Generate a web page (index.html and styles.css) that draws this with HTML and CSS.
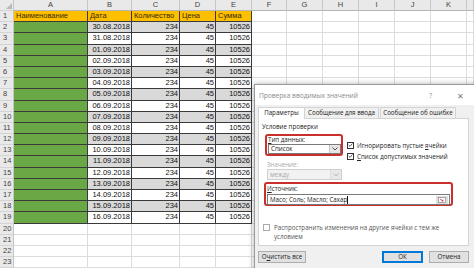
FILE: index.html
```html
<!DOCTYPE html>
<html>
<head>
    <title>Проверка вводимых значений</title>
    <link rel="stylesheet" href="styles.css">
</head>
<body>
    <div class="sheet">
        <div class="row head-row">
            <span class="rh corner"><i class="corner-mark"></i></span>
            <span class="ch">A</span><span class="ch">B</span><span class="ch">C</span><span class="ch">D</span><span class="ch">E</span>
            <span class="ch">F</span><span class="ch">G</span><span class="ch">H</span><span class="ch">I</span><span class="ch">J</span><span class="ch">K</span><span class="ch"></span>
        </div>
        <div class="row">
            <span class="rh">1</span>
            <span class="c dc hd">Наименование</span><span class="c dc hd">Дата</span><span class="c dc hd">Количество</span><span class="c dc hd">Цена</span><span class="c dc hd">Сумма</span>
            <span class="c"></span><span class="c"></span><span class="c"></span><span class="c"></span><span class="c"></span><span class="c"></span><span class="c"></span>
        </div>
        <div class="row alt">
            <span class="rh">2</span><span class="c dc name"></span><span class="c dc num">30.08.2018</span><span class="c dc num">234</span><span class="c dc num">45</span><span class="c dc num">10526</span>
            <span class="c"></span><span class="c"></span><span class="c"></span><span class="c"></span><span class="c"></span><span class="c"></span><span class="c"></span>
        </div>
        <div class="row">
            <span class="rh">3</span><span class="c dc name"></span><span class="c dc num">31.08.2018</span><span class="c dc num">234</span><span class="c dc num">45</span><span class="c dc num">10526</span>
            <span class="c"></span><span class="c"></span><span class="c"></span><span class="c"></span><span class="c"></span><span class="c"></span><span class="c"></span>
        </div>
        <div class="row alt">
            <span class="rh">4</span><span class="c dc name"></span><span class="c dc num">01.09.2018</span><span class="c dc num">234</span><span class="c dc num">45</span><span class="c dc num">10526</span>
            <span class="c"></span><span class="c"></span><span class="c"></span><span class="c"></span><span class="c"></span><span class="c"></span><span class="c"></span>
        </div>
        <div class="row">
            <span class="rh">5</span><span class="c dc name"></span><span class="c dc num">02.09.2018</span><span class="c dc num">234</span><span class="c dc num">45</span><span class="c dc num">10526</span>
            <span class="c"></span><span class="c"></span><span class="c"></span><span class="c"></span><span class="c"></span><span class="c"></span><span class="c"></span>
        </div>
        <div class="row alt">
            <span class="rh">6</span><span class="c dc name"></span><span class="c dc num">03.09.2018</span><span class="c dc num">234</span><span class="c dc num">45</span><span class="c dc num">10526</span>
            <span class="c"></span><span class="c"></span><span class="c"></span><span class="c"></span><span class="c"></span><span class="c"></span><span class="c"></span>
        </div>
        <div class="row">
            <span class="rh">7</span><span class="c dc name"></span><span class="c dc num">04.09.2018</span><span class="c dc num">234</span><span class="c dc num">45</span><span class="c dc num">10526</span>
            <span class="c"></span><span class="c"></span><span class="c"></span><span class="c"></span><span class="c"></span><span class="c"></span><span class="c"></span>
        </div>
        <div class="row alt">
            <span class="rh">8</span><span class="c dc name"></span><span class="c dc num">05.09.2018</span><span class="c dc num">234</span><span class="c dc num">45</span><span class="c dc num">10526</span>
            <span class="c"></span><span class="c"></span><span class="c"></span><span class="c"></span><span class="c"></span><span class="c"></span><span class="c"></span>
        </div>
        <div class="row">
            <span class="rh">9</span><span class="c dc name"></span><span class="c dc num">06.09.2018</span><span class="c dc num">234</span><span class="c dc num">45</span><span class="c dc num">10526</span>
            <span class="c"></span><span class="c"></span><span class="c"></span><span class="c"></span><span class="c"></span><span class="c"></span><span class="c"></span>
        </div>
        <div class="row alt">
            <span class="rh">10</span><span class="c dc name"></span><span class="c dc num">07.09.2018</span><span class="c dc num">234</span><span class="c dc num">45</span><span class="c dc num">10526</span>
            <span class="c"></span><span class="c"></span><span class="c"></span><span class="c"></span><span class="c"></span><span class="c"></span><span class="c"></span>
        </div>
        <div class="row">
            <span class="rh">11</span><span class="c dc name"></span><span class="c dc num">08.09.2018</span><span class="c dc num">234</span><span class="c dc num">45</span><span class="c dc num">10526</span>
            <span class="c"></span><span class="c"></span><span class="c"></span><span class="c"></span><span class="c"></span><span class="c"></span><span class="c"></span>
        </div>
        <div class="row alt">
            <span class="rh">12</span><span class="c dc name"></span><span class="c dc num">09.09.2018</span><span class="c dc num">234</span><span class="c dc num">45</span><span class="c dc num">10526</span>
            <span class="c"></span><span class="c"></span><span class="c"></span><span class="c"></span><span class="c"></span><span class="c"></span><span class="c"></span>
        </div>
        <div class="row">
            <span class="rh">13</span><span class="c dc name"></span><span class="c dc num">10.09.2018</span><span class="c dc num">234</span><span class="c dc num">45</span><span class="c dc num">10526</span>
            <span class="c"></span><span class="c"></span><span class="c"></span><span class="c"></span><span class="c"></span><span class="c"></span><span class="c"></span>
        </div>
        <div class="row alt">
            <span class="rh">14</span><span class="c dc name"></span><span class="c dc num">11.09.2018</span><span class="c dc num">234</span><span class="c dc num">45</span><span class="c dc num">10526</span>
            <span class="c"></span><span class="c"></span><span class="c"></span><span class="c"></span><span class="c"></span><span class="c"></span><span class="c"></span>
        </div>
        <div class="row">
            <span class="rh">15</span><span class="c dc name"></span><span class="c dc num">12.09.2018</span><span class="c dc num">234</span><span class="c dc num">45</span><span class="c dc num">10526</span>
            <span class="c"></span><span class="c"></span><span class="c"></span><span class="c"></span><span class="c"></span><span class="c"></span><span class="c"></span>
        </div>
        <div class="row alt">
            <span class="rh">16</span><span class="c dc name"></span><span class="c dc num">13.09.2018</span><span class="c dc num">234</span><span class="c dc num">45</span><span class="c dc num">10526</span>
            <span class="c"></span><span class="c"></span><span class="c"></span><span class="c"></span><span class="c"></span><span class="c"></span><span class="c"></span>
        </div>
        <div class="row">
            <span class="rh">17</span><span class="c dc name"></span><span class="c dc num">14.09.2018</span><span class="c dc num">234</span><span class="c dc num">45</span><span class="c dc num">10526</span>
            <span class="c"></span><span class="c"></span><span class="c"></span><span class="c"></span><span class="c"></span><span class="c"></span><span class="c"></span>
        </div>
        <div class="row alt">
            <span class="rh">18</span><span class="c dc name"></span><span class="c dc num">15.09.2018</span><span class="c dc num">234</span><span class="c dc num">45</span><span class="c dc num">10526</span>
            <span class="c"></span><span class="c"></span><span class="c"></span><span class="c"></span><span class="c"></span><span class="c"></span><span class="c"></span>
        </div>
        <div class="row">
            <span class="rh">19</span><span class="c dc name"></span><span class="c dc num">16.09.2018</span><span class="c dc num">234</span><span class="c dc num">45</span><span class="c dc num">10526</span>
            <span class="c"></span><span class="c"></span><span class="c"></span><span class="c"></span><span class="c"></span><span class="c"></span><span class="c"></span>
        </div>
        <div class="row">
            <span class="rh">20</span><span class="c"></span><span class="c"></span><span class="c"></span><span class="c"></span><span class="c"></span>
            <span class="c"></span><span class="c"></span><span class="c"></span><span class="c"></span><span class="c"></span><span class="c"></span><span class="c"></span>
        </div>
        <div class="row">
            <span class="rh">21</span><span class="c"></span><span class="c"></span><span class="c"></span><span class="c"></span><span class="c"></span>
            <span class="c"></span><span class="c"></span><span class="c"></span><span class="c"></span><span class="c"></span><span class="c"></span><span class="c"></span>
        </div>
        <div class="row">
            <span class="rh">22</span><span class="c"></span><span class="c"></span><span class="c"></span><span class="c"></span><span class="c"></span>
            <span class="c"></span><span class="c"></span><span class="c"></span><span class="c"></span><span class="c"></span><span class="c"></span><span class="c"></span>
        </div>
        <div class="row">
            <span class="rh">23</span><span class="c"></span><span class="c"></span><span class="c"></span><span class="c"></span><span class="c"></span>
            <span class="c"></span><span class="c"></span><span class="c"></span><span class="c"></span><span class="c"></span><span class="c"></span><span class="c"></span>
        </div>
    </div>

    <!-- data validation dialog, floating over the sheet -->
    <div class="dialog">
        <div class="dlg-title">
            <span>Проверка вводимых значений</span>
            <span class="dlg-help">?</span>
            <span class="dlg-close">✕</span>
        </div>
        <div class="dlg-body">
            <div class="tabs">
                <span class="tab active">Параметры</span>
                <span class="tab">Сообщение для ввода</span>
                <span class="tab">Сообщение об ошибке</span>
            </div>
            <div class="panel">
                <div class="group-title">Условие проверки</div>
                <div class="type-row">
                    <div class="mark mark-type">
                        <div class="lbl"><u>Т</u>ип данных:</div>
                        <div class="select">
                            <span>Список</span>
                            <span class="drop"><svg width="6" height="4" viewBox="0 0 6 4"><path d="M0.5 0.5 L3 3 L5.5 0.5" fill="none" stroke="#444" stroke-width="0.9"/></svg></span>
                        </div>
                    </div>
                    <div class="checks">
                        <label class="check"><span class="box on"><svg width="6" height="6" viewBox="0 0 6 6"><path d="M0.8 3 L2.4 4.6 L5.3 1.2" fill="none" stroke="#222" stroke-width="0.9"/></svg></span><span>Игнорировать пустые <u>я</u>чейки</span></label>
                        <label class="check"><span class="box on"><svg width="6" height="6" viewBox="0 0 6 6"><path d="M0.8 3 L2.4 4.6 L5.3 1.2" fill="none" stroke="#222" stroke-width="0.9"/></svg></span><span><u>С</u>писок допустимых значений</span></label>
                    </div>
                </div>
                <div class="value">
                    <div class="lbl off">Значение:</div>
                    <div class="select disabled">
                        <span>между</span>
                        <span class="drop"><svg width="6" height="4" viewBox="0 0 6 4"><path d="M0.5 0.5 L3 3 L5.5 0.5" fill="none" stroke="#b0b0b0" stroke-width="0.9"/></svg></span>
                    </div>
                </div>
                <div class="mark mark-source">
                    <div class="lbl"><u>И</u>сточник:</div>
                    <div class="input">
                        <span>Масо; Соль; Масло; Сахар<i class="caret"></i></span>
                        <span class="collapse"><svg width="8" height="6" viewBox="0 0 8 6"><rect x="0.5" y="0.5" width="7" height="5" fill="#fff" stroke="#777" stroke-width="0.6"/><path d="M2 2 L5 4 M5 2.6 L5 4 L3.6 4" fill="none" stroke="#c33" stroke-width="0.8"/></svg></span>
                    </div>
                </div>
                <label class="check spread"><span class="box"></span><span>Распространить изменения на другие ячейки с тем же условием</span></label>
            </div>
            <div class="buttons">
                <span class="btn clear">О<u>ч</u>истить все</span>
                <span class="btn ok">ОК</span>
                <span class="btn cancel">Отмена</span>
            </div>
        </div>
    </div>
</body>
</html>
```

FILE: styles.css
```css
html, body {
    margin: 0;
    overflow: hidden;
}

body {
    width: 474px;
    height: 268px;
    position: relative;
    background-color: #fff;
    font-family: "Liberation Sans", Arial, sans-serif;
    font-size: 7.5px;
    color: #111;
}

/* spreadsheet */
.row {
    display: grid;
    grid-template-columns: 14px 74px 44px 48px 36px 36px 35px 36px 36px 36px 36px 36px 7px;
    height: 11.2px;
}

.head-row {
    height: 11px;
    background-color: #e9e9e9;
}

.rh, .ch, .c {
    box-sizing: border-box;
    line-height: 10px;
    white-space: nowrap;
    overflow: hidden;
}

.rh {
    background-color: #e9e9e9;
    color: #444;
    padding-left: 3px;
    border-right: 1px solid #c6c6c6;
    border-bottom: 1px solid #d4d4d4;
}

.corner {
    position: relative;
}

.corner-mark {
    position: absolute;
    right: 1px;
    bottom: 1px;
    border-style: solid;
    border-width: 0 0 6px 6px;
    border-color: transparent transparent #b9b9b9 transparent;
}

.ch {
    text-align: center;
    color: #444;
    border-right: 1px solid #c6c6c6;
    border-bottom: 1px solid #b5b5b5;
}

.c {
    border-right: 1px solid #dcdcdc;
    border-bottom: 1px solid #dcdcdc;
    padding: 0 1px 0 2px;
}

.dc {
    border-right: 1px solid #3a3a3a;
    border-bottom: 1px solid #3a3a3a;
}

.hd {
    background-color: #fdbf00;
    color: #3a2a00;
}

.alt .dc {
    background-color: #d9d9d9;
}

.alt .dc.name, .dc.name {
    background-color: #69a845;
}

.num {
    text-align: right;
}

/* dialog */
.dialog {
    position: absolute;
    left: 254px;
    top: 84px;
    width: 228px;
    height: 192px;
    background-color: #f0f0f0;
    border: 1px solid #9a9a9a;
    box-shadow: 0 0 6px rgba(0, 0, 0, 0.3);
    font-family: "Open Sans", "Liberation Sans", sans-serif;
    font-size: 6.2px;
    color: #222;
}

.dlg-title {
    display: flex;
    align-items: center;
    height: 20px;
    padding-left: 4px;
    background-color: #fff;
    color: #8a8a8a;
    font-size: 6.6px;
}

.dlg-help {
    margin-left: auto;
    margin-right: 25px;
}

.dlg-close {
    margin-right: 19px;
    font-size: 8px;
    color: #777;
}

.dlg-body {
    padding: 2px 0 0 3px;
}

.tabs {
    display: flex;
    height: 11px;
}

.tab {
    box-sizing: border-box;
    height: 11px;
    line-height: 10px;
    text-align: center;
    white-space: nowrap;
    border: 1px solid #d4d4d4;
    border-bottom: none;
    font-size: 6.2px;
}

.tab.active {
    background-color: #fff;
    width: 47px;
    height: 12px;
    position: relative;
    z-index: 1;
}

.tab:nth-child(2) {
    width: 74px;
    border-left: none;
}

.tab:nth-child(3) {
    width: 76px;
    margin-left: 1px;
}

.panel {
    box-sizing: border-box;
    width: 211px;
    height: 128px;
    background-color: #fff;
    border: 1px solid #d4d4d4;
    padding: 3px 0 4px 3px;
    display: flex;
    flex-direction: column;
}

.group-title {
    height: 10px;
    line-height: 10px;
}

.lbl {
    height: 8px;
    line-height: 8px;
}

.lbl.off {
    color: #a8a8a8;
}

.mark {
    box-sizing: border-box;
    border: 2px solid #c9302c;
    border-radius: 3px;
}

.type-row {
    display: flex;
    margin-top: 2px;
}

.mark-type {
    width: 78px;
    height: 22px;
    margin-left: 3px;
    padding: 0 1px;
}

.select {
    box-sizing: border-box;
    display: flex;
    height: 10px;
    width: 73px;
    border: 1px solid #7a7a7a;
    background-color: #fff;
    line-height: 8px;
    padding-left: 2px;
}

.select span:first-child {
    flex: 1;
}

.drop {
    width: 10px;
    display: flex;
    align-items: center;
    justify-content: center;
    background-color: #e6e6e6;
    border-left: 1px solid #c8c8c8;
}

.select.disabled {
    border-color: #cfcfcf;
    background-color: #f2f2f2;
    color: #a8a8a8;
}

.select.disabled .drop {
    background-color: #e8e8e8;
    border-left-color: #dcdcdc;
}

.checks {
    padding: 7px 0 0 4px;
    display: flex;
    flex-direction: column;
    gap: 3px;
}

.check {
    display: flex;
    align-items: center;
    gap: 3px;
    height: 8px;
    white-space: nowrap;
}

.box {
    box-sizing: border-box;
    width: 7px;
    height: 7px;
    border: 1px solid #333;
    background-color: #fff;
    display: flex;
    align-items: center;
    justify-content: center;
    flex-shrink: 0;
}

.value {
    margin-left: 5px;
    margin-top: 1px;
}

.value .select {
    width: 75px;
    height: 11px;
    line-height: 9px;
}

.mark-source {
    width: 189px;
    height: 24px;
    margin-top: 2px;
    margin-left: 2px;
    padding: 1px 1px 0;
}

.input {
    box-sizing: border-box;
    display: flex;
    align-items: center;
    height: 11px;
    border: 1px solid #7a7a7a;
    padding-left: 2px;
    margin-top: 1px;
}

.input span:first-child {
    flex: 1;
}

.caret {
    display: inline-block;
    width: 1px;
    height: 8px;
    background-color: #111;
    vertical-align: middle;
}

.collapse {
    width: 12px;
    height: 8px;
    margin-right: 1px;
    background-color: #dedede;
    display: flex;
    align-items: center;
    justify-content: center;
}

.spread {
    margin-top: auto;
    align-items: flex-start;
    white-space: normal;
    height: auto;
    width: 190px;
    line-height: 9px;
    color: #555;
    margin-left: 1px;
    gap: 4px;
}

.spread .box {
    border-color: #aaa;
    margin-top: 1px;
}

.buttons {
    display: flex;
    margin-top: 5px;
    width: 211px;
}

.btn {
    box-sizing: border-box;
    height: 12px;
    line-height: 10px;
    text-align: center;
    background-color: #e1e1e1;
    border: 1px solid #adadad;
}

.clear {
    width: 48px;
}

.ok {
    width: 41px;
    margin-left: auto;
    border: 1px solid #0078d7;
    box-shadow: inset 0 0 0 1px #0078d7;
}

.cancel {
    width: 40px;
    margin-left: 6px;
}
```
